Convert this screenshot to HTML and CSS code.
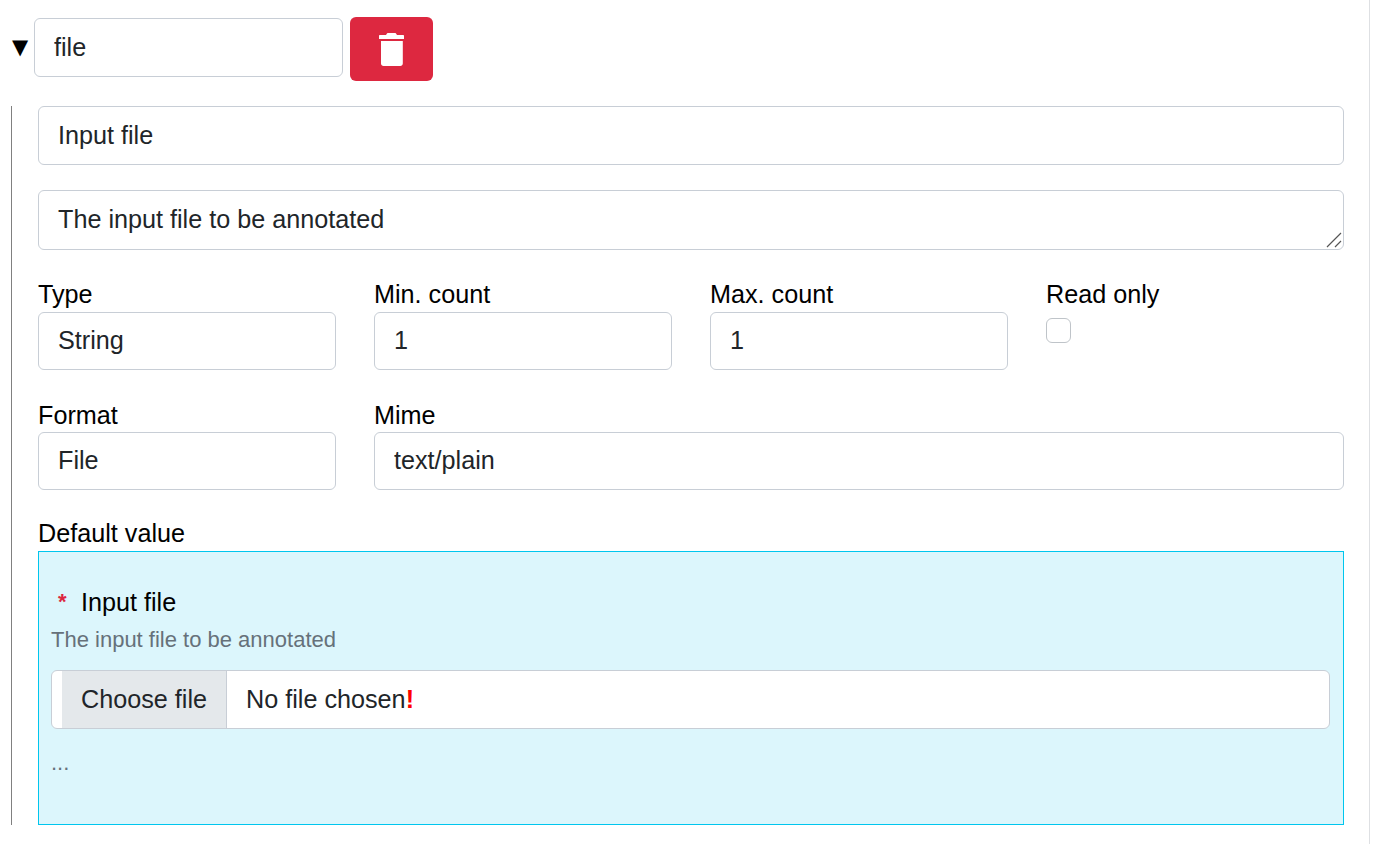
FILE: index.html
```html
<!DOCTYPE html>
<html lang="en">
<head>
<meta charset="utf-8">
<title>Input editor</title>
<link rel="stylesheet" href="styles.css">
</head>
<body>
<main class="page">
  <div class="head">
    <span class="caret">▼</span>
    <input class="control name" type="text" value="file" aria-label="Name">
    <button class="delete" type="button" aria-label="Delete">
      <svg class="trash" viewBox="0 0 25 33" width="25" height="33" aria-hidden="true">
        <path fill="#fff" d="M7.500 1.300C7.800.5 8.500 0 9.300 0h6.400c.8 0 1.500.5 1.800 1.300L18 2h6c.6 0 1 .4 1 1v3H0V3c0-.6.4-1 1-1h6zM2 8h21.800v22.500c0 1.400-1.100 2.500-2.500 2.500H4.500C3.100 33 2 31.900 2 30.500z"/>
      </svg>
    </button>
  </div>
  <section class="body">
    <input class="control title" type="text" value="Input file" aria-label="Title">
    <div class="desc-wrap">
      <textarea class="control desc" rows="1" aria-label="Description">The input file to be annotated</textarea>
      <svg class="grip" viewBox="0 0 16 16" width="16" height="16" aria-hidden="true">
        <path d="M1 15 15 1M9 15l6-6" stroke="#555" stroke-width="1.200" fill="none"/>
      </svg>
    </div>
    <div class="grid first">
      <div class="cell"><label class="label">Type</label><input class="control" type="text" value="String"></div>
      <div class="cell"><label class="label">Min. count</label><input class="control" type="text" value="1"></div>
      <div class="cell"><label class="label">Max. count</label><input class="control" type="text" value="1"></div>
      <div class="cell"><label class="label">Read only</label><input class="check" type="checkbox"></div>
    </div>
    <div class="grid second">
      <div class="cell"><label class="label">Format</label><input class="control" type="text" value="File"></div>
      <div class="cell wide"><label class="label">Mime</label><input class="control" type="text" value="text/plain"></div>
    </div>
    <div class="label default-label">Default value</div>
    <div class="preview">
      <div class="preview-title"><span class="star">*</span>Input file</div>
      <div class="muted">The input file to be annotated</div>
      <div class="file">
        <span class="file-btn">Choose file</span>
        <span class="file-name">No file chosen<b class="bang">!</b></span>
      </div>
      <div class="muted dots">...</div>
    </div>
  </section>
</main>
</body>
</html>
```
FILE: styles.css
```css
* { box-sizing: border-box; }
html, body { margin: 0; height: 100%; background: #fff; }
body {
  font-family: "Liberation Sans", Arial, sans-serif;
  font-size: 25.2px;
  color: #000;
  overflow: hidden;
}
.page {
  width: 1370px;
  height: 844px;
  border-right: 1px solid #dee0e3;
  padding: 17px 0 0 11px;
}
.head {
  display: flex;
  align-items: flex-start;
  height: 64px;
}
.caret {
  width: 23px;
  height: 59px;
  margin-top: 1px;
  font-family: "DejaVu Sans", sans-serif;
  font-size: 21px;
  line-height: 59px;
  color: #000;
  text-indent: 1px;
  white-space: nowrap;
}
.control {
  display: block;
  width: 100%;
  height: 58px;
  padding: 0 19px;
  border: 1px solid #c8ced6;
  border-radius: 6px;
  background: #fff;
  color: #212529;
  font: inherit;
  outline: none;
}
.cell .control { padding-bottom: 2px; }
.name { width: 309px; height: 59px; margin-top: 1px; }
.delete {
  display: flex;
  align-items: center;
  justify-content: center;
  width: 83px;
  height: 64px;
  margin-left: 7px;
  padding: 0;
  border: 0;
  border-radius: 6px;
  background: #dd2840;
}
.trash { display: block; }
.body {
  margin-top: 25px;
  width: 1333px;
  height: 719px;
  border-left: 1px solid #808080;
  padding-left: 26px;
}
.title { height: 59px; }
.desc-wrap {
  position: relative;
  margin-top: 25px;
}
.desc {
  height: 60px;
  padding-top: 13px;
  line-height: 30px;
  resize: none;
  overflow: hidden;
}
.grip {
  position: absolute;
  right: 2px;
  bottom: 2px;
}
.grid {
  display: grid;
  column-gap: 38px;
  grid-template-columns: repeat(4, 298px);
}
.first { margin-top: 28px; }
.second { margin-top: 28px; }
.wide { grid-column: span 3; }
.label {
  display: block;
  height: 34px;
  line-height: 33px;
  color: #000;
}
.second .label { line-height: 35px; }
.check {
  appearance: none;
  display: block;
  width: 25px;
  height: 25px;
  margin: 6px 0 0;
  border: 1px solid #bfc4c9;
  border-radius: 6px;
  background: #fff;
}
.default-label { margin-top: 27px; height: 34px; line-height: 33px; }
.preview {
  height: 274px;
  border: 1px solid #00c6ee;
  background: #dcf6fc;
  padding: 33px 13px 0 12px;
}
.preview-title {
  display: flex;
  height: 34px;
  line-height: 34px;
  padding-left: 7px;
}
.star {
  width: 23px;
  color: #dc2740;
  font-weight: 700;
  font-size: 22px;
}
.muted {
  color: #66717a;
  font-size: 22px;
  line-height: 32px;
}
.preview-title + .muted { margin-top: 5px; }
.file {
  display: flex;
  height: 59px;
  margin-top: 14px;
  border: 1px solid #c8ced6;
  border-radius: 6px;
  background: #fff;
  color: #212529;
  overflow: hidden;
}
.file-btn {
  margin-left: 10px;
  padding: 0 19px;
  line-height: 56px;
  background: #e4e8eb;
  border-right: 1px solid #c8ced6;
}
.file-name { padding-left: 19px; line-height: 56px; }
.bang { color: #f00; }
.dots { margin-top: 18px; }
```
